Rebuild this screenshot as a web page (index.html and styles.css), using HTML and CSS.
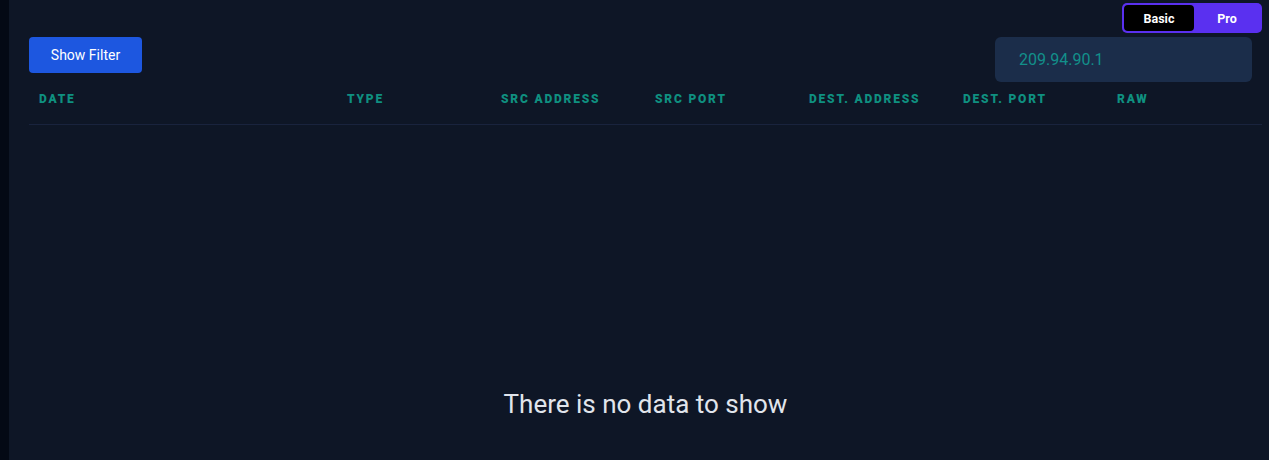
FILE: index.html
```html
<!DOCTYPE html>
<html>
<head>
<meta charset="utf-8">
<link rel="stylesheet" href="styles.css">
</head>
<body>
<div class="app">
  <div class="rail"></div>
  <main class="main">
    <div class="topbar">
      <div class="toggle">
        <span class="opt active">Basic</span>
        <span class="opt">Pro</span>
      </div>
    </div>
    <div class="controls">
      <button class="btn">Show Filter</button>
      <div class="search">209.94.90.1</div>
    </div>
    <div class="table">
      <div class="thead">
        <div class="th date">DATE</div>
        <div class="th">TYPE</div>
        <div class="th">SRC ADDRESS</div>
        <div class="th">SRC PORT</div>
        <div class="th">DEST. ADDRESS</div>
        <div class="th">DEST. PORT</div>
        <div class="th">RAW</div>
      </div>
      <div class="empty">There is no data to show</div>
    </div>
  </main>
</div>
</body>
</html>
```
FILE: styles.css
```css
* { box-sizing: border-box; }
html, body { margin: 0; height: 100%; }
body {
  background: #0e1626;
  font-family: Roboto, "Liberation Sans", sans-serif;
  overflow: hidden;
}
.app { display: flex; height: 460px; }
.rail { width: 9px; background: #040915; flex: none; }
.main { flex: 1; min-width: 0; display: flex; flex-direction: column; padding: 0 7px 0 20px; }
.topbar { display: flex; justify-content: flex-end; padding-top: 3px; height: 37px; }
.toggle {
  display: flex;
  width: 140px;
  height: 30px;
  background: #5a30f0;
  border-radius: 5px;
  padding: 2px;
}
.opt {
  flex: 1;
  display: flex;
  align-items: center;
  justify-content: center;
  color: #fff;
  font-weight: 700;
  font-size: 12.5px;
  border-radius: 4px;
}
.opt.active { background: #000; flex: 0 0 70px; }
.controls { display: flex; justify-content: space-between; align-items: flex-start; height: 45px; padding-right: 10px; }
.btn {
  width: 113px;
  height: 36px;
  background: #1d57e0;
  color: #fff;
  border: none;
  border-radius: 4px;
  font-family: inherit;
  font-size: 14px;
}
.search {
  width: 257px;
  height: 45px;
  background: #1b2d4a;
  border-radius: 6px;
  color: #12908a;
  font-size: 16px;
  padding-left: 24px;
  display: flex;
  align-items: center;
}
.table { display: flex; flex-direction: column; flex: 1; }
.thead {
  display: grid;
  grid-template-columns: 308px repeat(5, 154px) 1fr;
  padding: 11px 0 19px 10px;
  border-bottom: 1px solid #19233d;
}
.th {
  color: #0f9080;
  font-size: 12px;
  font-weight: 900;
  letter-spacing: 1.8px;
  line-height: 12px;
}
.empty {
  text-align: center;
  color: #e1e5ec;
  font-size: 26px;
  padding-top: 264px;
  line-height: 30px;
}
```
